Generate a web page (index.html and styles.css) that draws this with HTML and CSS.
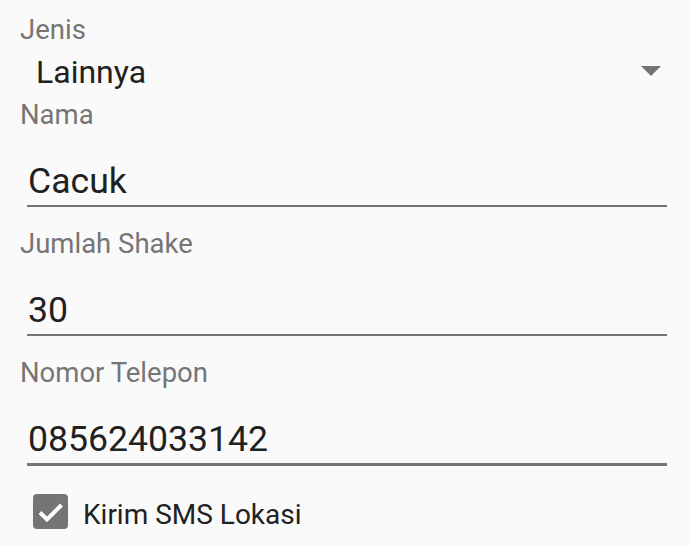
FILE: index.html
```html
<!DOCTYPE html>
<html>
<head>
<meta charset="utf-8">
<link rel="stylesheet" href="styles.css">
</head>
<body>
<div class="form">
  <div class="label top">Jenis</div>
  <div class="spinner">
    <span class="spinner-text">Lainnya</span>
    <svg class="arrow" width="20" height="10" viewBox="0 0 20 10"><path d="M0 0H20L10 10Z" fill="#757575"/></svg>
  </div>
  <div class="field">
    <div class="label">Nama</div>
    <div class="input">Cacuk</div>
  </div>
  <div class="field">
    <div class="label">Jumlah Shake</div>
    <div class="input">30</div>
  </div>
  <div class="field">
    <div class="label">Nomor Telepon</div>
    <div class="input focused">085624033142</div>
  </div>
  <div class="check-row">
    <svg class="checkbox" width="35" height="35" viewBox="0 0 35 35"><rect x="0" y="0" width="35" height="35" rx="4" fill="#757575"/><path d="M7 18.5L14 25.5L28.5 11" fill="none" stroke="#fff" stroke-width="4"/></svg>
    <span class="check-text">Kirim SMS Lokasi</span>
  </div>
</div>
</body>
</html>
```

FILE: styles.css
```css
html, body {
  margin: 0;
  padding: 0;
  background: #fafafa;
}
body {
  font-family: Roboto, "Noto Sans", sans-serif;
  width: 689px;
  height: 546px;
  overflow: hidden;
}
.form {
  display: flex;
  flex-direction: column;
  padding: 14px 22px 0 20px;
}
.label {
  color: #757575;
  font-size: 27.5px;
  line-height: 34px;
  height: 34px;
}
.label.top {
  line-height: 32px;
  height: 32px;
}
.spinner {
  display: flex;
  align-items: center;
  justify-content: space-between;
  height: 52px;
  padding-left: 16px;
  padding-right: 6px;
}
.spinner-text {
  color: #212121;
  font-size: 32px;
}
.arrow {
  display: block;
  margin-top: -2px;
}
.field {
  display: flex;
  flex-direction: column;
}
.field + .field {
  margin-top: 20px;
}
.input {
  margin-top: 27px;
  margin-left: 7px;
  padding-left: 1px;
  font-size: 35.6px;
  line-height: 44px;
  color: #212121;
  padding-bottom: 2px;
  border-bottom: 2px solid #757575;
}
.input.focused {
  padding-bottom: 2px;
  border-bottom: 3px solid #757575;
}
.check-row {
  display: flex;
  align-items: center;
  height: 45px;
  margin-top: 23px;
  padding-left: 13px;
  gap: 15px;
}
.checkbox {
  display: block;
}
.check-text {
  color: #212121;
  font-size: 28px;
  margin-top: 5px;
}
```
